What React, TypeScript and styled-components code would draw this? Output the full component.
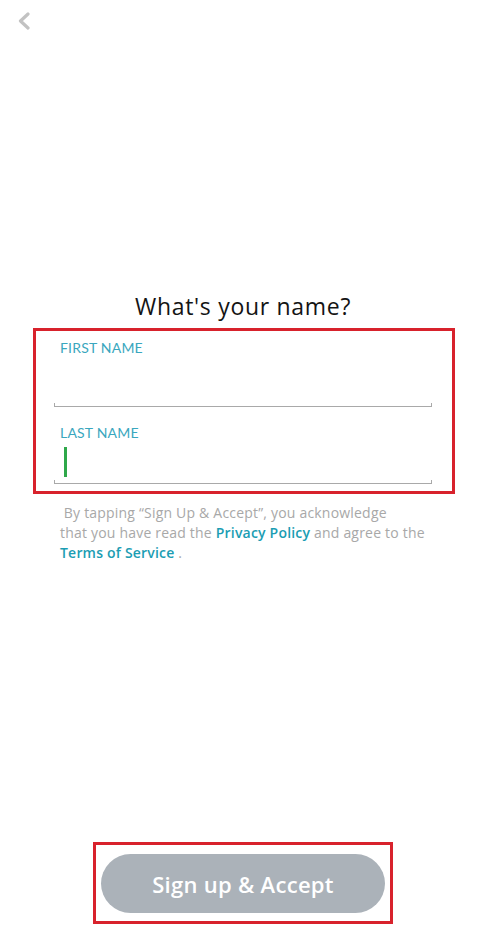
import React from 'react';
import styled, { createGlobalStyle } from 'styled-components';

const GlobalStyle = createGlobalStyle`
  html, body {
    margin: 0;
    padding: 0;
    background: #ffffff;
  }
  body {
    font-family: 'Open Sans', 'Noto Sans', 'Liberation Sans', sans-serif;
  }
`;

const Page = styled.div`
  display: flex;
  flex-direction: column;
  width: 486px;
  height: 933px;
  background: #ffffff;
  box-sizing: border-box;
  padding-bottom: 9px;
`;

const Header = styled.div`
  height: 40px;
  display: flex;
  align-items: flex-start;
  padding: 12px 0 0 17px;
  box-sizing: border-box;
`;

const BackButton = styled.button`
  border: none;
  background: none;
  padding: 0;
  width: 14px;
  height: 18px;
  cursor: pointer;
`;

const Title = styled.h1`
  margin: 252px 0 8px;
  font-size: 23px;
  line-height: 28px;
  font-weight: 500;
  color: #141414;
  text-align: center;
  letter-spacing: 0.7px;
`;

const Highlight = styled.div`
  margin-left: 33px;
  width: 422px;
  box-sizing: border-box;
  border: 3px solid #d8222c;
  padding: 8px 20px 7px 18px;
  display: flex;
  flex-direction: column;
`;

const Field = styled.div<{ gap: number }>`
  display: flex;
  flex-direction: column;
  margin-top: ${(p) => p.gap}px;
`;

const Label = styled.label`
  padding-left: 6px;
  font-family: Lato, 'Open Sans', sans-serif;
  font-size: 14px;
  line-height: 17px;
  color: #3aa7be;
  letter-spacing: 0.2px;
`;

const InputArea = styled.div<{ height: number }>`
  height: ${(p) => p.height}px;
  padding-left: 10px;
  display: flex;
  align-items: flex-end;
`;

const Cursor = styled.div`
  width: 3px;
  height: 30px;
  margin-bottom: 3px;
  background: #2fa84a;
`;

const Underline = styled.div`
  height: 4px;
  box-sizing: border-box;
  border: 1px solid #a9a9a9;
  border-top: none;
`;

const Terms = styled.p`
  margin: 9px 0 0 60px;
  font-size: 14px;
  line-height: 20px;
  color: #a8a8a8;
  letter-spacing: 0.2px;
`;

const Link = styled.a`
  color: #1b9db3;
  font-weight: 600;
  text-decoration: none;
`;

const Spacer = styled.div`
  flex: 1;
`;

const ButtonFrame = styled.div`
  margin-left: 93px;
  width: 300px;
  box-sizing: border-box;
  border: 3px solid #d8222c;
  padding: 9px 5px 8px;
`;

const SignUpButton = styled.button`
  width: 100%;
  height: 59px;
  border: none;
  border-radius: 30px;
  background: #abb2b9;
  color: #ffffff;
  font-family: 'Open Sans', 'Noto Sans', sans-serif;
  font-size: 22px;
  font-weight: 600;
  letter-spacing: 0.3px;
  cursor: pointer;
`;

export default function App() {
  return (
    <Page>
      <GlobalStyle />
      <Header>
        <BackButton aria-label="Back">
          <svg width="14" height="18" viewBox="0 0 14 18">
            <polyline
              points="11,2 3.5,9 11,16"
              fill="none"
              stroke="#c2c2c2"
              strokeWidth="3.2"
              strokeLinecap="round"
              strokeLinejoin="round"
            />
          </svg>
        </BackButton>
      </Header>

      <Title>What's your name?</Title>

      <Highlight>
        <Field gap={0}>
          <Label>FIRST NAME</Label>
          <InputArea height={47} />
          <Underline />
        </Field>
        <Field gap={17}>
          <Label>LAST NAME</Label>
          <InputArea height={39}>
            <Cursor />
          </InputArea>
          <Underline />
        </Field>
      </Highlight>

      <Terms>
        &nbsp;By tapping “Sign Up &amp; Accept”, you acknowledge
        <br />
        that you have read the <Link>Privacy Policy</Link> and agree to the
        <br />
        <Link>Terms of Service</Link> .
      </Terms>

      <Spacer />

      <ButtonFrame>
        <SignUpButton>Sign up &amp; Accept</SignUpButton>
      </ButtonFrame>
    </Page>
  );
}
